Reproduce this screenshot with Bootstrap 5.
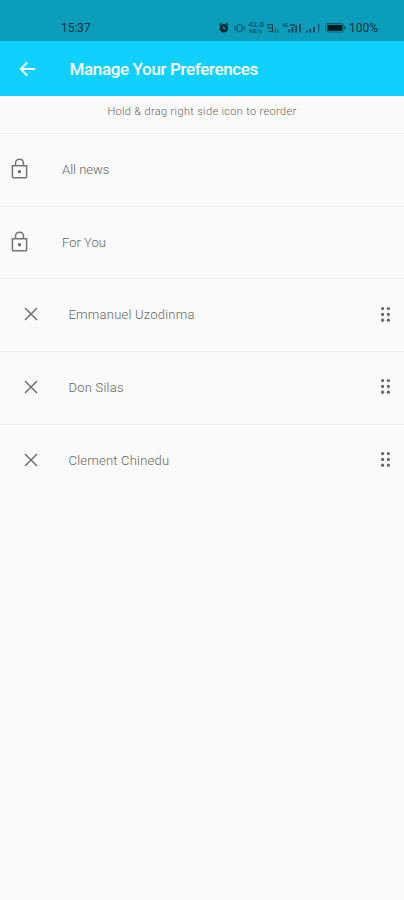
<!DOCTYPE html>
<html lang="en">
<head>
<meta charset="utf-8">
<meta name="viewport" content="width=device-width, initial-scale=1">
<title>Manage Your Preferences</title>
<link href="https://cdn.jsdelivr.net/npm/bootstrap@5.3.0/dist/css/bootstrap.min.css" rel="stylesheet">
<style>
body{background:#fafafa;font-family:Roboto,"Liberation Sans",sans-serif;color:#757575;min-height:100vh}
.statusbar{height:41px;background:#0c9dbd;color:#08323e;font-size:12px;padding:14px 26px 0 61px;line-height:28px}
.statusbar .clock{letter-spacing:-.1px}
.appbar{height:54.5px;background:#10d0ff;padding:1px 19px 0}
.appbar h1{font-size:17px;font-weight:500;letter-spacing:-.36px;color:#fff;margin-left:33.5px;line-height:24px}
.hint{height:37.5px;font-size:11px;line-height:31px;letter-spacing:.35px;color:#666;font-weight:300}
.pref-list .pref{height:72.7px;border:0;border-top:1px solid #f0f0f0;background:transparent;padding:0 13px 0 11px;color:#666;font-size:13px;font-weight:300}
.pref .label-text{margin-left:34px}
.pref.movable{padding-left:24px}
.pref.movable .label-text{margin-left:30.5px;letter-spacing:.22px}
svg{display:block;flex:none}
.pref svg{margin-bottom:2px}
</style>
<script src="https://cdn.jsdelivr.net/npm/bootstrap@5.3.0/dist/js/bootstrap.bundle.min.js"></script>
</head>
<body>
<svg class="d-none" aria-hidden="true">
<symbol id="lock" viewBox="0 0 17 21"><path d="M1.4 7.7h14.2v11q0 1-1 1H2.4q-1 0-1-1zM4.5 7.5V5.2a4 4 0 0 1 8 0v2.3" fill="none" stroke="#747474" stroke-width="1.5"/><circle cx="8.5" cy="13.7" r="1.6" fill="#666"/></symbol>
<symbol id="cross" viewBox="0 0 14 14"><path d="M1 1l12 12M13 1L1 13" fill="none" stroke="#707070" stroke-width="1.5"/></symbol>
<symbol id="grip" viewBox="0 0 11 17"><g fill="#666"><circle cx="2.6" cy="2.6" r="1.6"/><circle cx="8.4" cy="2.6" r="1.6"/><circle cx="2.6" cy="8.4" r="1.6"/><circle cx="8.4" cy="8.4" r="1.6"/><circle cx="2.6" cy="14.2" r="1.6"/><circle cx="8.4" cy="14.2" r="1.6"/></g></symbol>
</svg>
<div class="statusbar d-flex justify-content-between">
<span class="clock">15:37</span>
<div class="d-flex">
<svg width="131" height="27" viewBox="218 14 131 27">
<circle cx="223.8" cy="28.3" r="4.3" fill="#052a34"/><path d="M219.3 25l2.2-1.8M228.3 25l-2.2-1.8" stroke="#052a34" stroke-width="1.3"/><path d="M223.8 26v2.6h1.8" fill="none" stroke="#0c9dbd" stroke-width="1.1"/>
<g fill="none" stroke="#0a4f60" stroke-width="1"><rect x="237" y="24.7" width="5" height="7" rx="1.5"/><path d="M235 26v4.5M244 26v4.5"/></g>
<g fill="#0a4f60" font-family="Roboto,sans-serif" font-weight="500"><text x="248" y="27.3" font-size="6.5" textLength="16" lengthAdjust="spacingAndGlyphs">42.0</text><text x="249" y="33" font-size="5.5" textLength="13" lengthAdjust="spacingAndGlyphs">KB/s</text><text x="282.5" y="26.8" font-size="5">4G</text></g>
<g fill="none" stroke="#0a4251" stroke-width="1.1"><path d="M268 24.5h4.5v3.5h-4.5zM272.5 27v4.5h-4"/><path d="M275.3 28.5v4m2.5-3v3"/></g>
<path d="M289.3 29v3.5M292.5 27v5.5M296 25.5v7M300 23.7v8.8M290 25h5" stroke="#073c49" stroke-width="1.7"/>
<path d="M307 30.5v2M310.3 29v3.5M314 27v5.5" stroke="#073c49" stroke-width="1.7"/><path d="M318.7 23.8v8.7" stroke="#0a5d70" stroke-width="1.3"/>
<rect x="325.5" y="23.5" width="18.5" height="8.5" rx="2.5" fill="none" stroke="#0a6073"/><rect x="327.3" y="24.8" width="15.2" height="6" rx=".8" fill="#021c24"/><path d="M345.3 26.3v3" stroke="#0a4f60" stroke-width="1.2"/>
</svg>
<span>100%</span>
</div>
</div>
<header class="appbar d-flex align-items-center">
<svg width="17" height="16" viewBox="0 0 17 16" role="img" aria-label="Back"><path d="M16.2 8H2M8.3 1.3L1.6 8l6.7 6.7" fill="none" stroke="#fff" stroke-width="1.9"/></svg>
<h1 class="mb-0">Manage Your Preferences</h1>
</header>
<div class="hint text-center">Hold &amp; drag right side icon to reorder</div>
<ul class="pref-list list-group list-group-flush">
<li class="pref list-group-item d-flex align-items-center"><svg width="17" height="21"><use href="#lock"/></svg><span class="label-text">All news</span></li>
<li class="pref list-group-item d-flex align-items-center"><svg width="17" height="21"><use href="#lock"/></svg><span class="label-text">For You</span></li>
<li class="pref movable list-group-item d-flex align-items-center"><svg width="14" height="14"><use href="#cross"/></svg><span class="label-text">Emmanuel Uzodinma</span><svg class="ms-auto" width="11" height="17"><use href="#grip"/></svg></li>
<li class="pref movable list-group-item d-flex align-items-center"><svg width="14" height="14"><use href="#cross"/></svg><span class="label-text">Don Silas</span><svg class="ms-auto" width="11" height="17"><use href="#grip"/></svg></li>
<li class="pref movable list-group-item d-flex align-items-center"><svg width="14" height="14"><use href="#cross"/></svg><span class="label-text">Clement Chinedu</span><svg class="ms-auto" width="11" height="17"><use href="#grip"/></svg></li>
</ul>
</body>
</html>
